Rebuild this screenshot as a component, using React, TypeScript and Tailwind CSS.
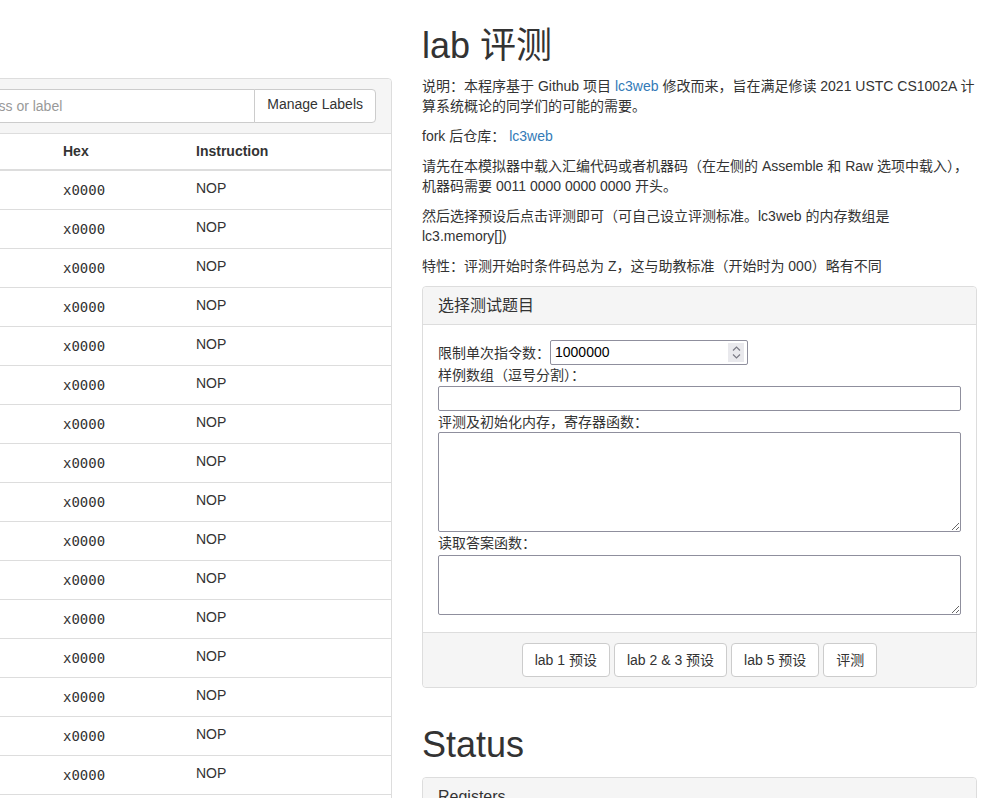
import React from 'react';

const rows = Array.from({ length: 17 }, (_, i) => ({
  addr: 'x' + (0x3000 + i).toString(16).toUpperCase().padStart(4, '0'),
  hex: 'x0000',
  ins: 'NOP',
}));

const MemoryPanel = () => {
  return (
    <div className="w-[392px] shrink-0 overflow-hidden pt-[78px]">
      {/* panel is wider than the column, its left part is scrolled out of view */}
      <div className="ml-[-120px] w-[512px] border border-[#ddd] rounded-[4px] bg-white">
        <div className="bg-[#f5f5f5] border-b border-[#ddd] px-[15px] py-[10px] rounded-t-[4px]">
          <div className="flex h-[34px]">
            <input
              className="flex-1 min-w-0 h-[34px] border border-[#ccc] rounded-l-[4px] bg-white px-[12px] text-[14px] text-[#555] placeholder:text-[#999] outline-none"
              placeholder="Jump to address or label"
            />
            <button className="ml-[-1px] h-[34px] px-[12px] pb-[3px] border border-[#ccc] rounded-r-[4px] bg-white text-[14px] text-[#333]">
              Manage Labels
            </button>
          </div>
        </div>
        <div className="flex h-[37px] border-b-2 border-[#ddd] text-[14px] font-bold text-[#333]">
          <div className="w-[174px] px-[8px] pt-[7px] leading-[20px]">Address</div>
          <div className="w-[133px] px-[8px] pt-[7px] leading-[20px]">Hex</div>
          <div className="flex-1 px-[8px] pt-[7px] leading-[20px]">Instruction</div>
        </div>
        {rows.map((r, i) => (
          <div
            key={i}
            className={
              i === 0
                ? 'flex h-[38px] text-[14px] text-[#333]'
                : 'flex h-[39px] border-t border-[#ddd] text-[14px] text-[#333]'
            }
          >
            <div className="w-[174px] px-[8px] pt-[8px] leading-[20px] font-['DejaVu_Sans_Mono',monospace]">
              {r.addr}
            </div>
            <div className="w-[133px] px-[8px] pt-[9px] leading-[20px] font-['DejaVu_Sans_Mono',monospace]">
              {r.hex}
            </div>
            <div className="flex-1 px-[8px] pt-[7px] leading-[20px]">{r.ins}</div>
          </div>
        ))}
      </div>
    </div>
  );
};

const Spinner = () => (
  <div className="w-[16px] h-[19px] bg-[#e9e9ed] flex flex-col items-center justify-center gap-[3px]">
    <svg width="9" height="5" viewBox="0 0 9 5">
      <path d="M1 4.5 L4.5 1 L8 4.5" fill="none" stroke="#7a7a85" strokeWidth="1.2" />
    </svg>
    <svg width="9" height="5" viewBox="0 0 9 5">
      <path d="M1 0.5 L4.5 4 L8 0.5" fill="none" stroke="#7a7a85" strokeWidth="1.2" />
    </svg>
  </div>
);

const LabPanel = () => {
  return (
    <div className="mt-[4px] border border-[#ddd] rounded-[4px] bg-white">
      <div className="h-[38px] bg-[#f5f5f5] border-b border-[#ddd] px-[15px] flex items-center text-[16px] text-[#333] rounded-t-[4px]">
        选择测试题目
      </div>
      <div className="px-[15px] pt-[15px] pb-[17px] flex flex-col text-[14px] text-[#333]">
        <div className="flex items-center h-[25px]">
          <span className="leading-[20px]">限制单次指令数：</span>
          <div className="w-[198px] h-[25px] border border-[#8f8f9d] rounded-[2px] flex items-center pl-[4px] pr-[3px] bg-white">
            <input className="flex-1 min-w-0 outline-none text-[14px] text-black" defaultValue="1000000" />
            <Spinner />
          </div>
        </div>
        <label className="leading-[20px] h-[20px]">样例数组（逗号分割）：</label>
        <input className="mt-[1px] h-[25px] w-full border border-[#8f8f9d] rounded-[2px] bg-white outline-none" />
        <label className="mt-[1px] leading-[20px] h-[20px]">评测及初始化内存，寄存器函数：</label>
        <textarea className="h-[100px] w-full border border-[#8f8f9d] rounded-[2px] bg-white outline-none" />
        <label className="mt-[1px] leading-[20px] h-[20px]">读取答案函数：</label>
        <textarea className="mt-[2px] h-[60px] w-full border border-[#8f8f9d] rounded-[2px] bg-white outline-none" />
      </div>
      <div className="bg-[#f5f5f5] border-t border-[#ddd] px-[15px] py-[10px] flex justify-center gap-[4px] rounded-b-[4px]">
        {['lab 1 预设', 'lab 2 & 3 预设', 'lab 5 预设', '评测'].map((t) => (
          <button
            key={t}
            className="h-[34px] px-[12px] border border-[#ccc] rounded-[4px] bg-white text-[14px] text-[#333]"
          >
            {t}
          </button>
        ))}
      </div>
    </div>
  );
};

export default function App() {
  return (
    <div className="h-[798px] overflow-hidden flex bg-white text-[#333] font-['Liberation_Sans','Noto_Sans_CJK_SC',sans-serif]">
      <MemoryPanel />
      <div className="ml-[30px] w-[555px] shrink-0 pt-[26px]">
        <h1 className="text-[36px] leading-[40px] mb-[10px]">lab 评测</h1>
        <div className="text-[14px] leading-[20px]">
          <p className="mb-[10px]">
            说明：本程序基于 Github 项目 <a className="text-[#337ab7]">lc3web</a> 修改而来，旨在满足修读 2021 USTC CS1002A
            计算系统概论的同学们的可能的需要。
          </p>
          <p className="mb-[10px]">
            fork 后仓库： <a className="text-[#337ab7]">lc3web</a>
          </p>
          <p className="mb-[10px]">
            请先在本模拟器中载入汇编代码或者机器码（在左侧的 Assemble 和 Raw 选项中载入），机器码需要 0011 0000 0000 0000 开头。
          </p>
          <p className="mb-[10px]">然后选择预设后点击评测即可（可自己设立评测标准。lc3web 的内存数组是 lc3.memory[])</p>
          <p className="mb-[10px]">特性：评测开始时条件码总为 Z，这与助教标准（开始时为 000）略有不同</p>
        </div>
        <LabPanel />
        <h1 className="mt-[37px] text-[36px] leading-[40px] mb-[12px]">Status</h1>
        <div className="border border-[#ddd] rounded-[4px]">
          <div className="bg-[#f5f5f5] px-[15px] py-[10px] text-[16px] leading-[18px] rounded-t-[4px]">Registers</div>
          <div className="h-[200px]" />
        </div>
      </div>
    </div>
  );
}
